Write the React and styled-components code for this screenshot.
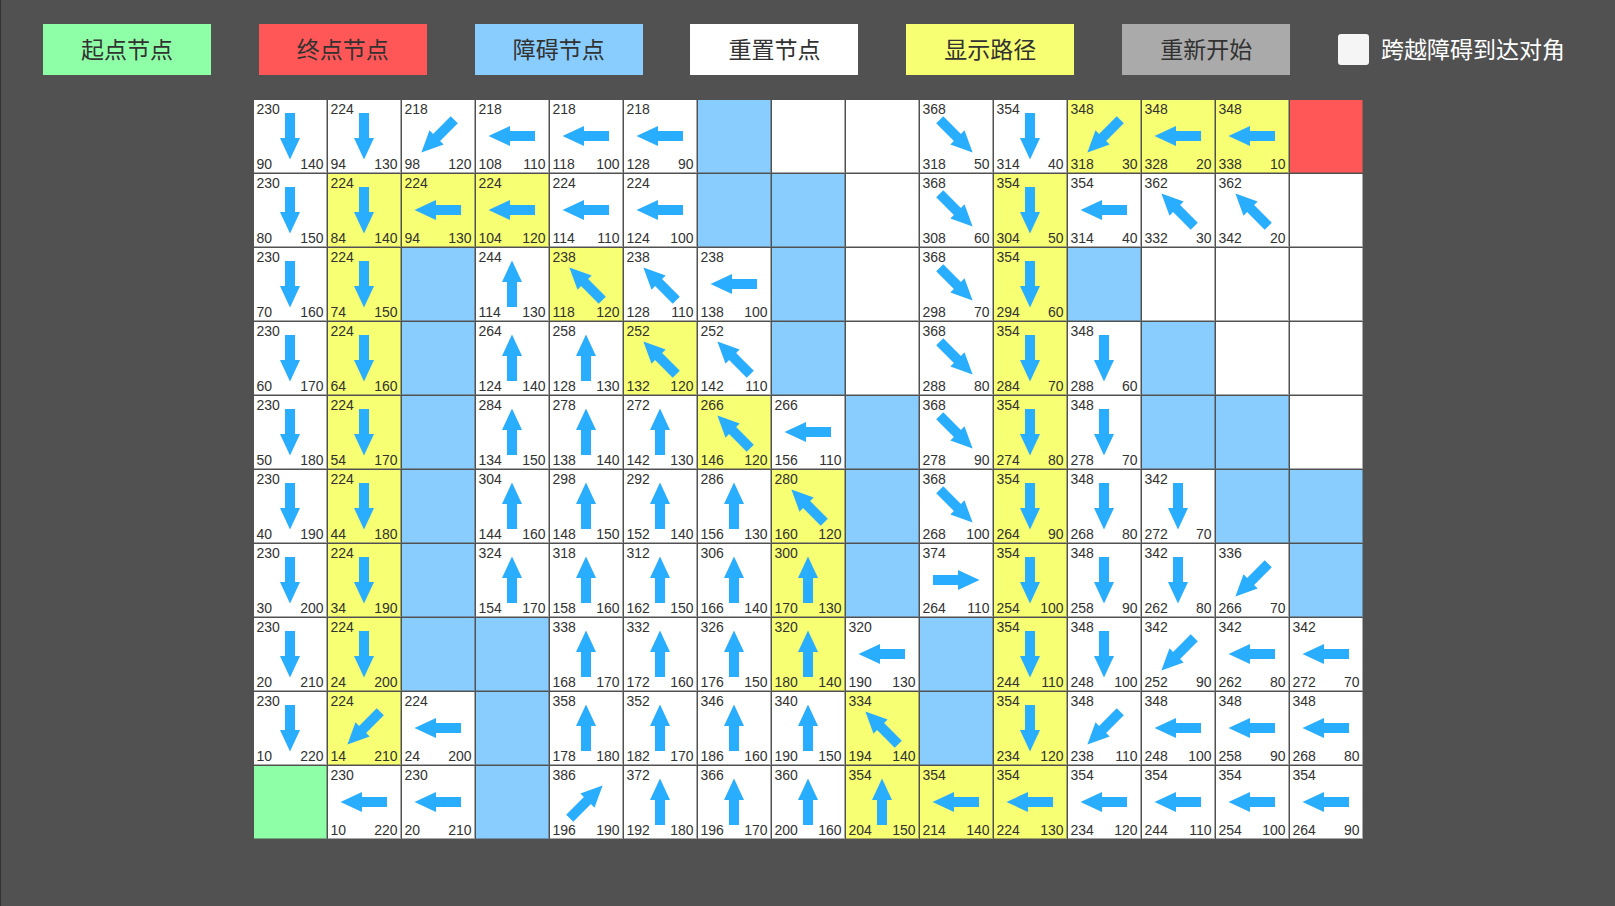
import React, { useState } from 'react';
import styled, { createGlobalStyle } from 'styled-components';

const GlobalStyle = createGlobalStyle`
  body {
    margin: 0;
    background: #515151;
    color: #323232;
    font-family: "Liberation Sans", "Noto Sans CJK SC", sans-serif;
  }
`;

const colors = {
  start: '#8fffa7',
  end: '#ff5757',
  wall: '#89cdff',
  open: '#ffffff',
  path: '#f7ff73',
  restart: '#aaaaaa',
};

const Page = styled.div`
  min-height: 100vh;
  box-sizing: border-box;
  padding-top: 24px;
  border-left: 1px solid #323232;
`;

const Toolbar = styled.header`
  display: flex;
  align-items: center;
  justify-content: space-between;
  height: 51px;
  padding: 0 50px 0 42px;
`;

const ToolButton = styled.button`
  width: 168px;
  height: 51px;
  padding: 0;
  border: 0;
  background: ${(p) => colors[p.$kind]};
  color: #323232;
  font-family: "Noto Sans CJK SC", sans-serif;
  font-size: 23px;
  font-weight: 400;
  line-height: 48px;
  padding-bottom: 3px;
  cursor: pointer;
`;

const Option = styled.label`
  display: flex;
  align-items: center;
  gap: 12px;
  color: #ffffff;
  font-family: "Noto Sans CJK SC", sans-serif;
  font-size: 23px;
  font-weight: 400;
  line-height: 48px;
  white-space: nowrap;
`;

const OptionText = styled.span`
  padding-bottom: 3px;
`;

const Tick = styled.input`
  appearance: none;
  width: 31px;
  height: 31px;
  margin: 0;
  border-radius: 3px;
  background: #f5f5f5;

  &:checked {
    box-shadow: inset 0 0 0 8px #f5f5f5;
    background: #323232;
  }
`;

const Board = styled.main`
  display: grid;
  grid-template-columns: repeat(15, 73px);
  grid-auto-rows: 73px;
  gap: 1px;
  justify-content: center;
  margin-top: 25px;
`;

const Cell = styled.div`
  display: grid;
  grid-template-columns: 1fr 1fr;
  grid-template-rows: 17px 38px 16px;
  box-sizing: border-box;
  padding: 0 3px;
  background: ${(p) => colors[p.$kind]};
  box-shadow: inset -1px -1px 0 rgba(81, 81, 81, 0.5);
  font-size: 14px;
  line-height: 18px;
`;

const Total = styled.span`
  grid-column: 1 / 3;
`;

const Travelled = styled.span`
  grid-row: 3;
`;

const Remaining = styled.span`
  grid-row: 3;
  text-align: right;
`;

const ArrowIcon = styled.svg`
  grid-column: 1 / 3;
  grid-row: 2;
  place-self: center;
  width: 48px;
  height: 48px;
  overflow: visible;
  fill: #29adff;
`;

const angles = { U: 0, UR: 45, R: 90, DR: 135, D: 180, DL: 225, L: 270, UL: 315 };

function Arrow({ direction }) {
  return (
    <ArrowIcon viewBox="-24 -24 48 48" aria-hidden="true">
      <path
        d="M0 -23.5L10 -2H5V23H-5V-2H-10Z"
        transform={`rotate(${angles[direction]})`}
      />
    </ArrowIcon>
  );
}

// Each node is written as total,travelled,remaining,direction; a leading * puts it on the path.
// S is the start, E the end, # an obstacle and . a node not visited.
const rows = [
  '230,90,140,D 224,94,130,D 218,98,120,DL 218,108,110,L 218,118,100,L 218,128,90,L # . . 368,318,50,DR 354,314,40,D *348,318,30,DL *348,328,20,L *348,338,10,L E',
  '230,80,150,D *224,84,140,D *224,94,130,L *224,104,120,L 224,114,110,L 224,124,100,L # # . 368,308,60,DR *354,304,50,D 354,314,40,L 362,332,30,UL 362,342,20,UL .',
  '230,70,160,D *224,74,150,D # 244,114,130,U *238,118,120,UL 238,128,110,UL 238,138,100,L # . 368,298,70,DR *354,294,60,D # . . .',
  '230,60,170,D *224,64,160,D # 264,124,140,U 258,128,130,U *252,132,120,UL 252,142,110,UL # . 368,288,80,DR *354,284,70,D 348,288,60,D # . .',
  '230,50,180,D *224,54,170,D # 284,134,150,U 278,138,140,U 272,142,130,U *266,146,120,UL 266,156,110,L # 368,278,90,DR *354,274,80,D 348,278,70,D # # .',
  '230,40,190,D *224,44,180,D # 304,144,160,U 298,148,150,U 292,152,140,U 286,156,130,U *280,160,120,UL # 368,268,100,DR *354,264,90,D 348,268,80,D 342,272,70,D # #',
  '230,30,200,D *224,34,190,D # 324,154,170,U 318,158,160,U 312,162,150,U 306,166,140,U *300,170,130,U # 374,264,110,R *354,254,100,D 348,258,90,D 342,262,80,D 336,266,70,DL #',
  '230,20,210,D *224,24,200,D # # 338,168,170,U 332,172,160,U 326,176,150,U *320,180,140,U 320,190,130,L # *354,244,110,D 348,248,100,D 342,252,90,DL 342,262,80,L 342,272,70,L',
  '230,10,220,D *224,14,210,DL 224,24,200,L # 358,178,180,U 352,182,170,U 346,186,160,U 340,190,150,U *334,194,140,UL # *354,234,120,D 348,238,110,DL 348,248,100,L 348,258,90,L 348,268,80,L',
  'S 230,10,220,L 230,20,210,L # 386,196,190,UR 372,192,180,U 366,196,170,U 360,200,160,U *354,204,150,U *354,214,140,L *354,224,130,L 354,234,120,L 354,244,110,L 354,254,100,L 354,264,90,L',
];

const plainKinds = { S: 'start', E: 'end', '#': 'wall', '.': 'open' };

const nodes = rows.flatMap((row) =>
  row.split(' ').map((text) => {
    if (plainKinds[text]) return { kind: plainKinds[text] };
    const onPath = text.startsWith('*');
    const [total, travelled, remaining, direction] = text.replace('*', '').split(',');
    return { kind: onPath ? 'path' : 'open', total, travelled, remaining, direction };
  })
);

const tools = [
  ['start', '起点节点'],
  ['end', '终点节点'],
  ['wall', '障碍节点'],
  ['open', '重置节点'],
  ['path', '显示路径'],
  ['restart', '重新开始'],
];

export default function App() {
  const [crossing, setCrossing] = useState(false);
  return (
    <>
      <GlobalStyle />
      <Page>
        <Toolbar>
          {tools.map(([kind, label]) => (
            <ToolButton key={kind} type="button" $kind={kind}>
              {label}
            </ToolButton>
          ))}
          <Option htmlFor="crossing">
            <Tick
              id="crossing"
              type="checkbox"
              checked={crossing}
              onChange={(e) => setCrossing(e.target.checked)}
            />
            <OptionText>跨越障碍到达对角</OptionText>
          </Option>
        </Toolbar>
        <Board>
          {nodes.map((node, i) => (
            <Cell key={i} $kind={node.kind}>
              {node.direction && (
                <>
                  <Total>{node.total}</Total>
                  <Arrow direction={node.direction} />
                  <Travelled>{node.travelled}</Travelled>
                  <Remaining>{node.remaining}</Remaining>
                </>
              )}
            </Cell>
          ))}
        </Board>
      </Page>
    </>
  );
}
